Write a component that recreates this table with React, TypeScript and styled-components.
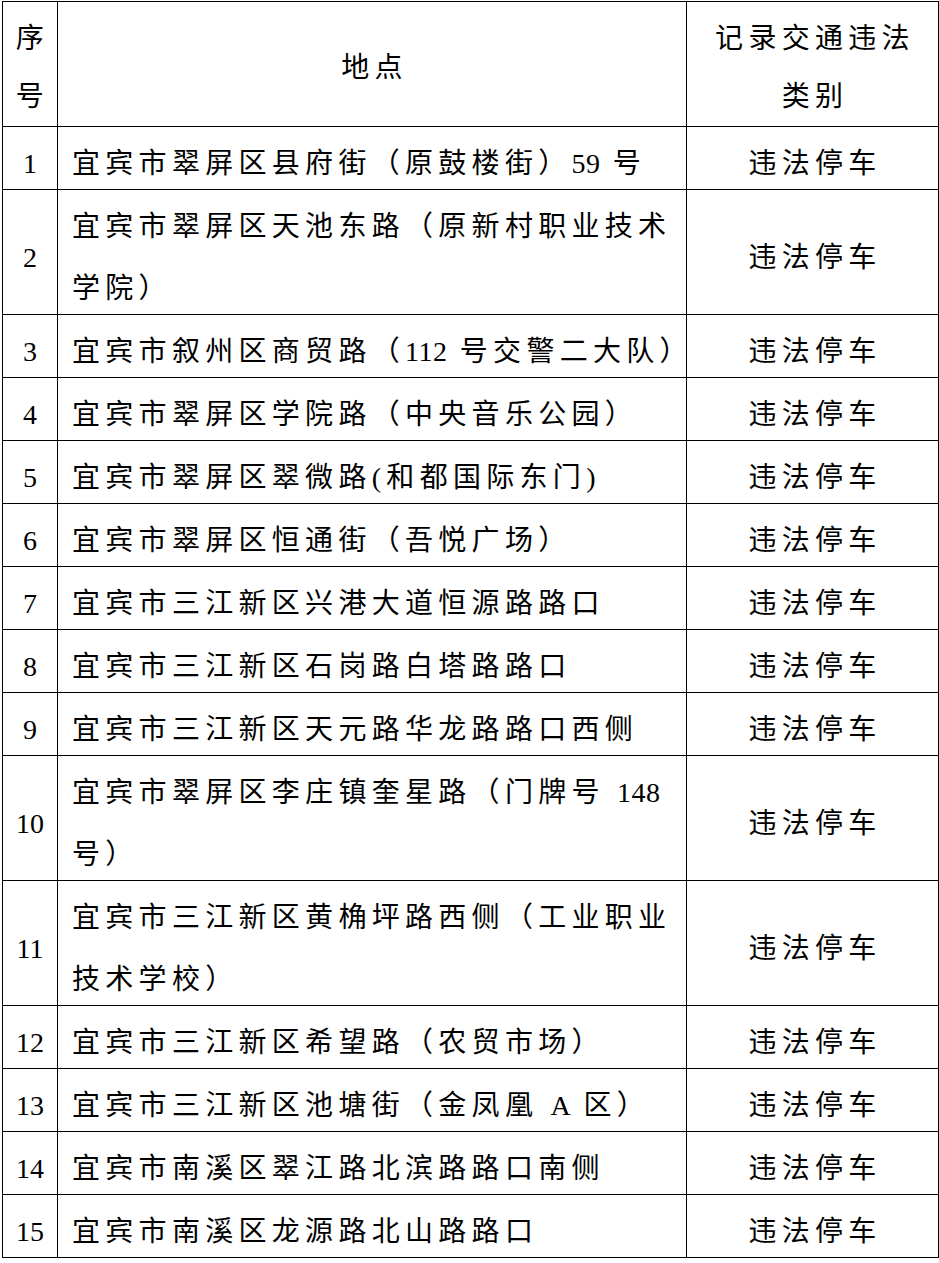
import { createGlobalStyle } from "styled-components";
import styled from "styled-components";

const GlobalStyle = createGlobalStyle`
  html, body {
    margin: 0;
    padding: 0;
    background: #ffffff;
  }
  body {
    font-family: "Liberation Serif", "Noto Sans CJK SC", serif;
    color: #000;
  }
`;

// 每行数据：序号、地点（按原图分行）、类别
interface RowType {
  no: number;
  lines: string[];
  kind: string;
}

const rows: RowType[] = [
  { no: 1, lines: ["宜宾市翠屏区县府街（原鼓楼街）59 号"], kind: "违法停车" },
  { no: 2, lines: ["宜宾市翠屏区天池东路（原新村职业技术", "学院）"], kind: "违法停车" },
  { no: 3, lines: ["宜宾市叙州区商贸路（112 号交警二大队）"], kind: "违法停车" },
  { no: 4, lines: ["宜宾市翠屏区学院路（中央音乐公园）"], kind: "违法停车" },
  { no: 5, lines: ["宜宾市翠屏区翠微路(和都国际东门)"], kind: "违法停车" },
  { no: 6, lines: ["宜宾市翠屏区恒通街（吾悦广场）"], kind: "违法停车" },
  { no: 7, lines: ["宜宾市三江新区兴港大道恒源路路口"], kind: "违法停车" },
  { no: 8, lines: ["宜宾市三江新区石岗路白塔路路口"], kind: "违法停车" },
  { no: 9, lines: ["宜宾市三江新区天元路华龙路路口西侧"], kind: "违法停车" },
  { no: 10, lines: ["宜宾市翠屏区李庄镇奎星路（门牌号 148", "号）"], kind: "违法停车" },
  { no: 11, lines: ["宜宾市三江新区黄桷坪路西侧（工业职业", "技术学校）"], kind: "违法停车" },
  { no: 12, lines: ["宜宾市三江新区希望路（农贸市场）"], kind: "违法停车" },
  { no: 13, lines: ["宜宾市三江新区池塘街（金凤凰 A 区）"], kind: "违法停车" },
  { no: 14, lines: ["宜宾市南溪区翠江路北滨路路口南侧"], kind: "违法停车" },
  { no: 15, lines: ["宜宾市南溪区龙源路北山路路口"], kind: "违法停车" },
];

const Table = styled.table`
  margin: 1px 0 0 2px;
  width: 936px;
  table-layout: fixed;
  border-collapse: collapse;
  font-size: 28px;
  letter-spacing: 5.3px;
`;

const HeadCell = styled.th`
  border: 1.5px solid #000;
  padding: 8px 0 0 5px;
  font-weight: normal;
  text-align: center;
  vertical-align: middle;
  line-height: 58px;
  white-space: nowrap;
`;

const Cell = styled.td<{ $align?: "left" | "center" }>`
  border: 1.5px solid #000;
  padding: ${(p) => (p.$align === "left" ? "6px 0 0 14px" : "6px 0 0 5px")};
  text-align: ${(p) => p.$align || "center"};
  vertical-align: middle;
  white-space: nowrap;
`;

const NoCell = styled(Cell)`
  letter-spacing: 0;
  padding-left: 0;
`;

const Line = styled.div`
  line-height: 62px;
  &:last-child {
    margin-bottom: -6px;
  }
`;

const Latin = styled.span`
  letter-spacing: 0.5px;
`;

// 数字和字母间距较小，单独包一层
function renderText(s: string) {
  return s.split(/([0-9A-Za-z]+)/).map((part, i) =>
    /^[0-9A-Za-z]+$/.test(part) ? <Latin key={i}>{part}</Latin> : part
  );
}

export default function App() {
  return (
    <>
      <GlobalStyle />
      <Table>
        <colgroup>
          <col style={{ width: 55 }} />
          <col style={{ width: 629 }} />
          <col style={{ width: 252 }} />
        </colgroup>
        <thead>
          <tr>
            <HeadCell>
              <div>序</div>
              <div>号</div>
            </HeadCell>
            <HeadCell>地点</HeadCell>
            <HeadCell>
              <div>记录交通违法</div>
              <div>类别</div>
            </HeadCell>
          </tr>
        </thead>
        <tbody>
          {rows.map((r) => (
            <tr key={r.no}>
              <NoCell>
                <Line>{r.no}</Line>
              </NoCell>
              <Cell $align="left">
                {r.lines.map((l, i) => (
                  <Line key={i}>{renderText(l)}</Line>
                ))}
              </Cell>
              <Cell>
                <Line>{r.kind}</Line>
              </Cell>
            </tr>
          ))}
        </tbody>
      </Table>
    </>
  );
}
